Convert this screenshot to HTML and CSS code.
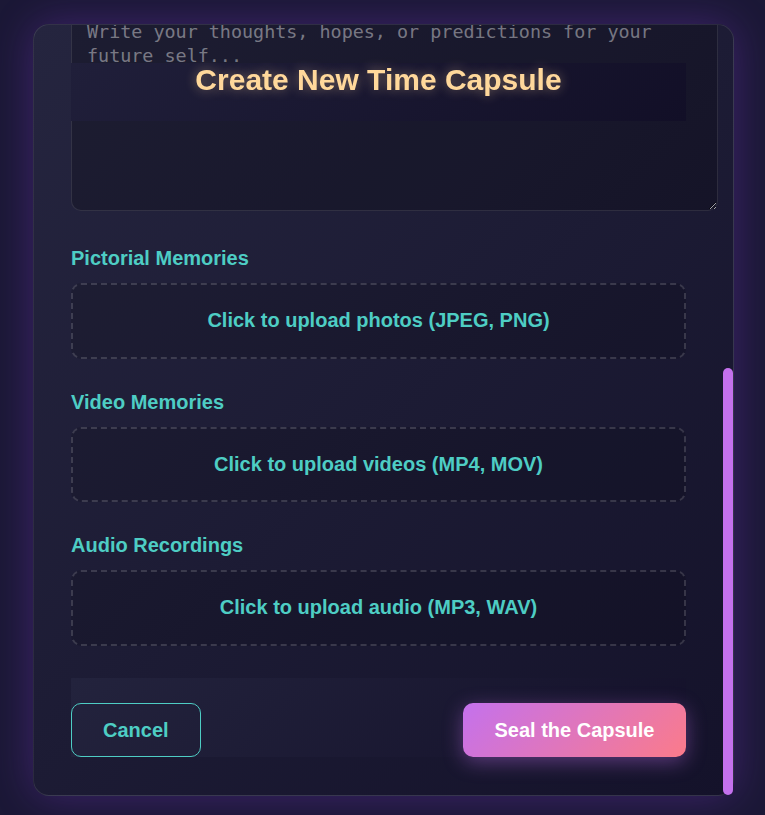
FILE: index.html
```html
<!DOCTYPE html>
<html>
  <head>
    <meta charset="utf-8" />
    <title>Time Capsule</title>
    <link rel="stylesheet" href="styles.css">
  </head>
  <body>
    <div class="backdrop">
      <div class="modal-frame">
        <div class="modal">
          <form class="capsule-form">
            <div class="modal-header">
              <h2>Create New Time Capsule</h2>
            </div>
            <div class="form-group">
              <label for="capsule-name">Capsule Name</label>
              <input type="text" id="capsule-name" class="field" placeholder="Give your capsule a name...">
            </div>
            <div class="form-group">
              <label for="open-date">Opening Date</label>
              <input type="text" id="open-date" class="field" placeholder="When should it open?">
            </div>
            <div class="form-group">
              <label for="recipient">Recipient</label>
              <input type="text" id="recipient" class="field" placeholder="Who is it for?">
            </div>
            <div class="form-group">
              <label for="mood">Current Mood</label>
              <input type="text" id="mood" class="field" placeholder="How are you feeling today?">
            </div>
            <div class="form-group message-group">
              <label for="message">Your Message</label>
              <textarea id="message" class="message" placeholder="Write your thoughts, hopes, or predictions for your future self..."></textarea>
            </div>
            <div class="form-group">
              <label>Pictorial Memories</label>
              <div class="upload-box">Click to upload photos (JPEG, PNG)</div>
            </div>
            <div class="form-group">
              <label>Video Memories</label>
              <div class="upload-box">Click to upload videos (MP4, MOV)</div>
            </div>
            <div class="form-group">
              <label>Audio Recordings</label>
              <div class="upload-box">Click to upload audio (MP3, WAV)</div>
            </div>
            <div class="modal-footer">
              <button type="button" class="btn btn-cancel">Cancel</button>
              <button type="button" class="btn btn-seal">Seal the Capsule</button>
            </div>
          </form>
        </div>
        <div class="scroll-thumb"></div>
      </div>
    </div>
  </body>
</html>
```

FILE: styles.css
```css
body {
  margin: 0;
  background-color: #1b1836;
  font-family: "Liberation Sans", Arial, sans-serif;
}
.backdrop {
  height: 815px;
  box-sizing: border-box;
  padding: 24px 0 0 33px;
}
.modal-frame {
  position: relative;
  width: 701px;
}
.modal {
  width: 701px;
  height: 772px;
  box-sizing: border-box;
  padding: 38px 47px 38px 37px;
  border: 1px solid rgba(255, 255, 255, 0.1);
  border-radius: 16px;
  background: linear-gradient(135deg, #25253f 0%, #14122a 100%);
  box-shadow: 0 0 40px rgba(138, 60, 220, 0.32);
  overflow-y: auto;
  /* start scrolled to the end */
  display: flex;
  flex-direction: column-reverse;
}
.modal::-webkit-scrollbar {
  display: none;
}
.scroll-thumb {
  position: absolute;
  right: 1px;
  bottom: 1px;
  width: 10px;
  height: 427px;
  border-radius: 5px;
  background: #c471ed;
}
.capsule-form {
  flex-shrink: 0;
  margin: 0;
}
.modal-header {
  position: sticky;
  top: 0;
  z-index: 2;
  padding-bottom: 24px;
  text-align: center;
  background: linear-gradient(135deg, #201f3a 0%, #120f27 100%);
}
.modal-header h2 {
  margin: 0;
  font-size: 30px;
  line-height: 34px;
  color: #ffd89b;
  text-shadow: 0 0 12px rgba(255, 216, 155, 0.45);
}
.form-group {
  margin-bottom: 32px;
}
.message-group {
  margin-bottom: 36px;
}
.form-group label {
  display: block;
  margin-bottom: 13px;
  font-size: 20px;
  line-height: 23px;
  font-weight: bold;
  color: #4ecdc4;
}
.field {
  display: block;
  width: 100%;
  height: 48px;
  box-sizing: border-box;
  padding: 0 15px;
  border: 1px solid rgba(255, 255, 255, 0.1);
  border-radius: 10px;
  background: rgba(0, 0, 0, 0.2);
  color: #e0e0e0;
  font-size: 18px;
}
.message {
  display: block;
  width: 615px;
  height: 175px;
  margin: 0;
  padding: 15px;
  border: 1px solid rgba(255, 255, 255, 0.1);
  border-radius: 10px;
  background: rgba(0, 0, 0, 0.2);
  color: #e0e0e0;
  font-family: "DejaVu Sans Mono", monospace;
  font-size: 18.4px;
  line-height: 23.3px;
}
.message::placeholder {
  color: rgba(255, 255, 255, 0.42);
}
.upload-box {
  padding: 24px;
  border: 2px dashed rgba(255, 255, 255, 0.15);
  border-radius: 10px;
  background: rgba(0, 0, 0, 0.12);
  text-align: center;
  font-size: 20px;
  line-height: 23.6px;
  font-weight: bold;
  color: #4ecdc4;
}
.modal-footer {
  position: sticky;
  bottom: 0;
  z-index: 2;
  display: flex;
  justify-content: space-between;
  align-items: center;
  padding-top: 25px;
  background: linear-gradient(135deg, #23233d 0%, #14112a 100%);
}
.btn {
  font-family: "Liberation Sans", Arial, sans-serif;
  font-size: 20px;
  line-height: 23px;
  font-weight: bold;
  border-radius: 10px;
  cursor: pointer;
}
.btn-cancel {
  padding: 14.5px 31px;
  border: 1px solid #4ecdc4;
  background: transparent;
  color: #4ecdc4;
}
.btn-seal {
  padding: 15.5px 31.5px;
  border: none;
  background: linear-gradient(135deg, #c471ed 0%, #fb7b8a 100%);
  color: #fff;
  box-shadow: 0 5px 20px rgba(196, 113, 237, 0.4);
}
```
